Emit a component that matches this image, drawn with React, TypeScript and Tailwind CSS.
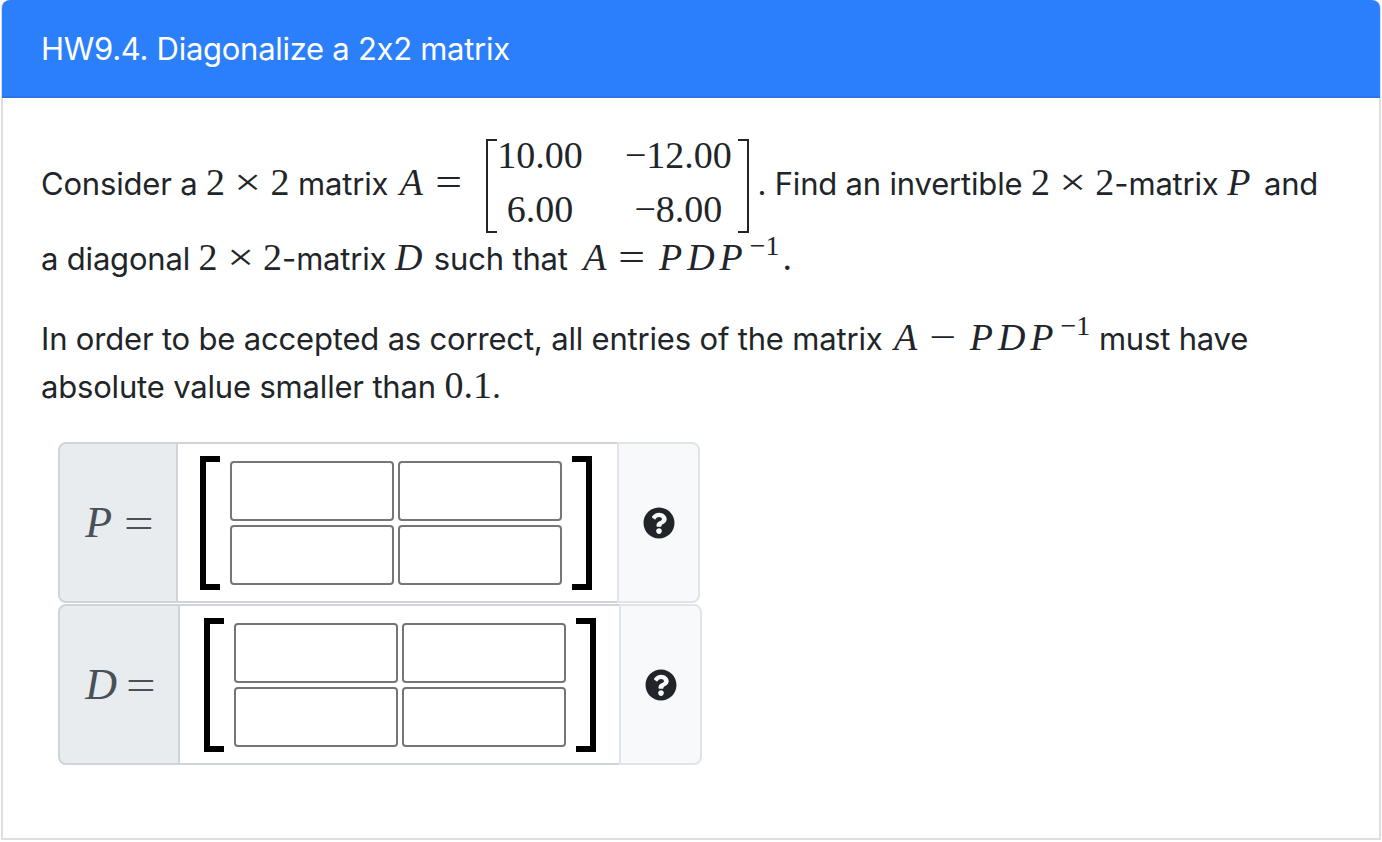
import type { ReactNode } from "react";

const Mi = ({ children }: { children: ReactNode }) => (
  <span className="italic font-['Liberation_Serif',serif] text-[38px] tracking-[3px] leading-none">{children}</span>
);

const Pdp = () => (
  <span className="italic font-['Liberation_Serif',serif] text-[38px] tracking-[5px] leading-none">PDP</span>
);

const Mn = ({ children }: { children: ReactNode }) => (
  <span className="font-['Liberation_Serif',serif] text-[38px] tracking-normal leading-none">{children}</span>
);

const Op = ({ children }: { children: ReactNode }) => (
  <span className="inline-block font-['Liberation_Serif',serif] text-[38px] tracking-normal leading-none mx-[12px] scale-x-[1.25]">{children}</span>
);

// = en − hebben iets meer ruimte dan ×
const Rel = ({ children }: { children: ReactNode }) => (
  <span className="inline-block font-['Liberation_Serif',serif] text-[38px] tracking-normal leading-none ml-[12px] mr-[16px] scale-x-[1.25]">{children}</span>
);

const Sup = () => (
  <sup className="static font-['Liberation_Serif',serif] text-[28px] tracking-normal leading-none align-[15px] ml-[2px]">−1</sup>
);

// kleine 2x2 matrix in de tekst
function InlineMatrix() {
  return (
    <span className="inline-flex align-middle font-['Liberation_Serif',serif] text-[38px] tracking-normal leading-[54px] ml-[11px] mr-[8px] mt-[-3px] mb-[-1px] h-[94px]">
      <span className="w-[11px] border-l-2 border-t-2 border-b-2 border-[#212529]" />
      <span className="flex flex-col items-center w-[85px] -mt-[11px]">
        <span>10.00</span>
        <span>6.00</span>
      </span>
      <span className="flex flex-col items-center w-[116px] ml-[38px] mr-[2px] -mt-[11px]">
        <span>−12.00</span>
        <span>−8.00</span>
      </span>
      <span className="w-[11px] border-r-2 border-t-2 border-b-2 border-[#212529]" />
    </span>
  );
}

function Cell() {
  return <input className="w-[164px] h-[60px] bg-white border-2 border-[#767676] rounded-[4px]" />;
}

function MatrixInput({ label, addon, pad, eq }: { label: string; addon: string; pad: string; eq: string }) {
  return (
    <div className="flex h-[161px]">
      <div className={`${addon} flex items-center justify-center shrink-0 bg-[#e9ecef] border-2 border-[#ced4da] rounded-l-[8px] text-[#495057]`}>
        <span className="italic font-['Liberation_Serif',serif] text-[44px] tracking-[2px]">{label}</span>
        <span className={`${eq} inline-block font-['Liberation_Serif',serif] text-[42px] scale-x-[1.25]`}>=</span>
      </div>
      <div className={`${pad} flex items-center bg-white border-y-2 border-[#ced4da] shrink-0 w-[439px]`}>
        <div className="w-[20px] h-[134px] border-l-[6px] border-y-[6px] border-black" />
        <div className="grid grid-cols-2 gap-x-[4px] gap-y-[4px] mx-[10px]">
          <Cell />
          <Cell />
          <Cell />
          <Cell />
        </div>
        <div className="w-[20px] h-[134px] border-r-[6px] border-y-[6px] border-black" />
      </div>
      <div className="flex items-center justify-center w-[83px] bg-[#f8f9fa] border-2 border-[#e0e3e8] rounded-r-[8px]">
        <svg viewBox="0 0 512 512" className="w-[32px] h-[32px]" fill="#212529">
          <path d="M504 256c0 137-111 248-248 248S8 393 8 256C8 119 119 8 256 8s248 111 248 248zM262.700 90c-54.500 0-89.300 23-116.500 63.800-3.500 5.300-2.400 12.400 2.700 16.300l34.700 26.300c5.200 3.900 12.600 3 16.700-2.100 17.900-22.700 30.100-35.800 57.300-35.800 20.400 0 45.700 13.100 45.700 33 0 15-12.400 22.700-32.600 34-23.600 13.200-54.800 29.700-54.800 70.900V302c0 6.600 5.400 12 12 12h56c6.600 0 12-5.400 12-12v-1.300c0-28.600 83.500-29.700 83.500-107C378.400 135.500 317.900 90 262.700 90zM256 339c-25.400 0-46 20.600-46 46s20.600 46 46 46 46-20.600 46-46-20.600-46-46-46z" />
        </svg>
      </div>
    </div>
  );
}

export default function App() {
  return (
    <div className="h-[842px] overflow-hidden bg-white font-['Inter',sans-serif] text-[31px] tracking-[-0.18px] leading-[48px] text-[#212529] [font-feature-settings:'calt'_0]">
      <div className="mx-[1px] h-[840px] border-2 border-t-0 border-[#dfdfdf] rounded-t-[8px]">
        <div className="h-[98px] -mx-[1px] pt-[2px] bg-[#2c7ffb] border-b-2 border-[#2a75e6] text-white tracking-[-0.28px] flex items-center px-[39px] rounded-t-[8px]">
          HW9.4. Diagonalize a 2x2 matrix
        </div>
        <div className="pl-[38px] pt-[44px]">
          <p className="w-[1290px]">
            Consider a <Mn>2</Mn><Op>×</Op><Mn>2</Mn> matrix <span className="ml-[3px]"><Mi>A</Mi></span><Rel>=</Rel>
            <InlineMatrix />. Find an invertible <Mn>2</Mn><Op>×</Op><Mn>2</Mn>-matrix <span className="mr-[2px]"><Mi>P</Mi></span> and a diagonal{" "}
            <Mn>2</Mn><Op>×</Op><Mn>2</Mn>-matrix <Mi>D</Mi> such that <span className="ml-[7px]"><Mi>A</Mi></span><Rel>=</Rel><Pdp /><Sup />
            <span className="ml-[3px]"><Mn>.</Mn></span>
          </p>
          <p className="w-[1290px] mt-[29px]">
            In order to be accepted as correct, all entries of the matrix <span className="ml-[3px]"><Mi>A</Mi></span><Rel>−</Rel><Pdp /><Sup /> must have
            absolute value smaller than <Mn>0.1</Mn>.
          </p>
          <div className="mt-[31px] ml-[17px] flex flex-col gap-[1px]">
            <MatrixInput label="P" addon="w-[120px]" pad="pl-[22px]" eq="ml-[13px]" />
            <MatrixInput label="D" addon="w-[122px]" pad="pl-[24px]" eq="ml-[10px]" />
          </div>
        </div>
      </div>
    </div>
  );
}
